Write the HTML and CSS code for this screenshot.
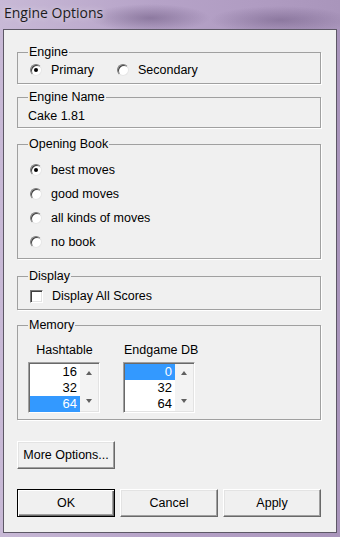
FILE: index.html
```html
<!DOCTYPE html>
<html lang="en">
<head>
    <meta charset="UTF-8">
    <title>Engine Options</title>
    <link rel="stylesheet" href="styles.css">
</head>
<body>

<div class="titlebar">Engine Options</div>

<div class="dialog">
    <fieldset class="group g-engine">
        <legend>Engine</legend>
        <div class="engine-row">
            <label class="opt engine-opt"><span class="radio checked"></span>Primary</label>
            <label class="opt engine-opt"><span class="radio"></span>Secondary</label>
        </div>
    </fieldset>

    <fieldset class="group g-name">
        <legend>Engine Name</legend>
        <div class="name-value">Cake 1.81</div>
    </fieldset>

    <fieldset class="group g-book">
        <legend>Opening Book</legend>
        <label class="opt book-opt"><span class="radio checked"></span>best moves</label>
        <label class="opt book-opt"><span class="radio"></span>good moves</label>
        <label class="opt book-opt"><span class="radio"></span>all kinds of moves</label>
        <label class="opt book-opt"><span class="radio"></span>no book</label>
    </fieldset>

    <fieldset class="group g-display">
        <legend>Display</legend>
        <label class="opt"><span class="checkbox"></span>Display All Scores</label>
    </fieldset>

    <fieldset class="group g-memory">
        <legend>Memory</legend>
        <div class="memory-row">
            <div class="mem-col">
                <div class="mem-label center">Hashtable</div>
                <div class="listbox">
                    <div class="items">
                        <div class="item">16</div>
                        <div class="item">32</div>
                        <div class="item selected">64</div>
                    </div>
                    <div class="scroll"><span class="arrow-up"></span><span class="arrow-down"></span></div>
                </div>
            </div>
            <div class="mem-col">
                <div class="mem-label">Endgame DB</div>
                <div class="listbox">
                    <div class="items">
                        <div class="item selected">0</div>
                        <div class="item">32</div>
                        <div class="item">64</div>
                    </div>
                    <div class="scroll"><span class="arrow-up"></span><span class="arrow-down"></span></div>
                </div>
            </div>
        </div>
    </fieldset>

    <div class="more-row">
        <button class="btn">More Options...</button>
    </div>

    <div class="actions">
        <button class="btn default">OK</button>
        <button class="btn">Cancel</button>
        <button class="btn">Apply</button>
    </div>
</div>

</body>
</html>
```

FILE: styles.css
```css
body {
    margin: 0;
    height: 537px;
    overflow: hidden;
    font-family: "Liberation Sans", Arial, sans-serif;
    font-size: 12.5px;
    color: #000;
    background:
        radial-gradient(ellipse 60px 14px at 150px 18px, rgba(90, 70, 110, 0.45), transparent),
        radial-gradient(ellipse 70px 14px at 280px 20px, rgba(90, 70, 110, 0.4), transparent),
        linear-gradient(90deg, #c8b9d6, #b6a3c8 45%, #b09cc2 75%, #a995bb);
}
.titlebar {
    height: 29px;
    box-sizing: border-box;
    padding: 3px 0 0 4px;
    line-height: 19px;
    font-family: "Open Sans", "Noto Sans", sans-serif;
    font-size: 14px;
    color: #1c1c1c;
    text-shadow: 0 0 6px rgba(255, 255, 255, 0.6);
}
.dialog {
    margin-left: 3px;
    width: 334px;
    box-sizing: border-box;
    border: 1px solid #5d5866;
    background-color: #f0f0f0;
    padding: 15px 15px 15px 13px;
}
.group {
    margin: 0;
    min-width: 0;
    padding: 0 10px;
    border: 1px solid #a0a0a0;
    box-shadow: 1px 1px 0 #fff;
}
.group legend {
    padding: 0 1px;
    line-height: 14px;
}
.opt {
    display: flex;
    align-items: center;
    height: 16px;
    line-height: 16px;
    white-space: nowrap;
}
.radio {
    position: relative;
    width: 10px;
    height: 10px;
    margin: 0 9px 0 2px;
    border: 1px solid;
    border-color: #7a7a7a #e6e6e6 #e6e6e6 #7a7a7a;
    border-radius: 50%;
    background-color: #fff;
    box-shadow: inset 1px 1px 0 #404040;
}
.radio.checked::after {
    content: "";
    position: absolute;
    left: 3px;
    top: 3px;
    width: 4px;
    height: 4px;
    border-radius: 50%;
    background-color: #000;
}
.checkbox {
    width: 11px;
    height: 11px;
    margin: 0 9px 0 2px;
    border: 1px solid;
    border-color: #7a7a7a #fff #fff #7a7a7a;
    background-color: #fff;
    box-shadow: inset 1px 1px 0 #404040, inset -1px -1px 0 #e3e3e3;
}

.g-engine {
    padding-top: 3px;
    padding-bottom: 5px;
}
.engine-row {
    display: flex;
}
.engine-opt {
    width: 87px;
}
.g-name {
    margin-top: 6px;
    padding-top: 4px;
    padding-bottom: 3px;
}
.name-value {
    line-height: 16px;
}
.g-book {
    margin-top: 9px;
    padding-top: 7px;
    padding-bottom: 4px;
}
.book-opt {
    height: 24px;
}
.g-display {
    margin-top: 10px;
    padding-top: 5px;
    padding-bottom: 5px;
}
.g-memory {
    margin-top: 8px;
    padding-top: 11px;
    padding-bottom: 6px;
}
.memory-row {
    display: flex;
    gap: 23px;
}
.mem-col {
    width: 72px;
}
.mem-label {
    line-height: 14px;
    margin-bottom: 5px;
    padding-left: 1px;
    white-space: nowrap;
}
.mem-label.center {
    text-align: center;
}
.listbox {
    display: flex;
    height: 51px;
    box-sizing: border-box;
    border: 1px solid;
    border-color: #a0a0a0 #fff #fff #a0a0a0;
    box-shadow: inset 1px 1px 0 #696969, inset -1px -1px 0 #e3e3e3;
    background-color: #fff;
    padding: 1px;
}
.items {
    width: 50px;
}
.item {
    height: 16px;
    line-height: 16px;
    padding-right: 3px;
    text-align: right;
    font-size: 13px;
}
.item.selected {
    background-color: #3399ff;
    color: #fff;
}
.scroll {
    flex: 1;
    display: flex;
    flex-direction: column;
    justify-content: space-between;
    align-items: center;
    padding: 7px 0 8px;
    background-color: #f3f3f3;
}
.arrow-up,
.arrow-down {
    width: 0;
    height: 0;
    border-left: 3.5px solid transparent;
    border-right: 3.5px solid transparent;
}
.arrow-up {
    border-bottom: 4px solid #606060;
}
.arrow-down {
    border-top: 4px solid #606060;
}

.btn {
    width: 98px;
    height: 28px;
    padding: 0;
    font-family: inherit;
    font-size: 12.5px;
    color: #000;
    background-color: #f0f0f0;
    border: 1px solid;
    border-color: #fff #696969 #696969 #fff;
    box-shadow: inset -1px -1px 0 #a0a0a0, inset 1px 1px 0 #e3e3e3;
}
.btn.default {
    border-color: #000;
    box-shadow: inset 1px 1px 0 #fff, inset -1px -1px 0 #696969, inset -2px -2px 0 #a0a0a0;
}
.more-row {
    margin-top: 21px;
}
.actions {
    display: flex;
    gap: 5px;
    margin-top: 20px;
}
```
